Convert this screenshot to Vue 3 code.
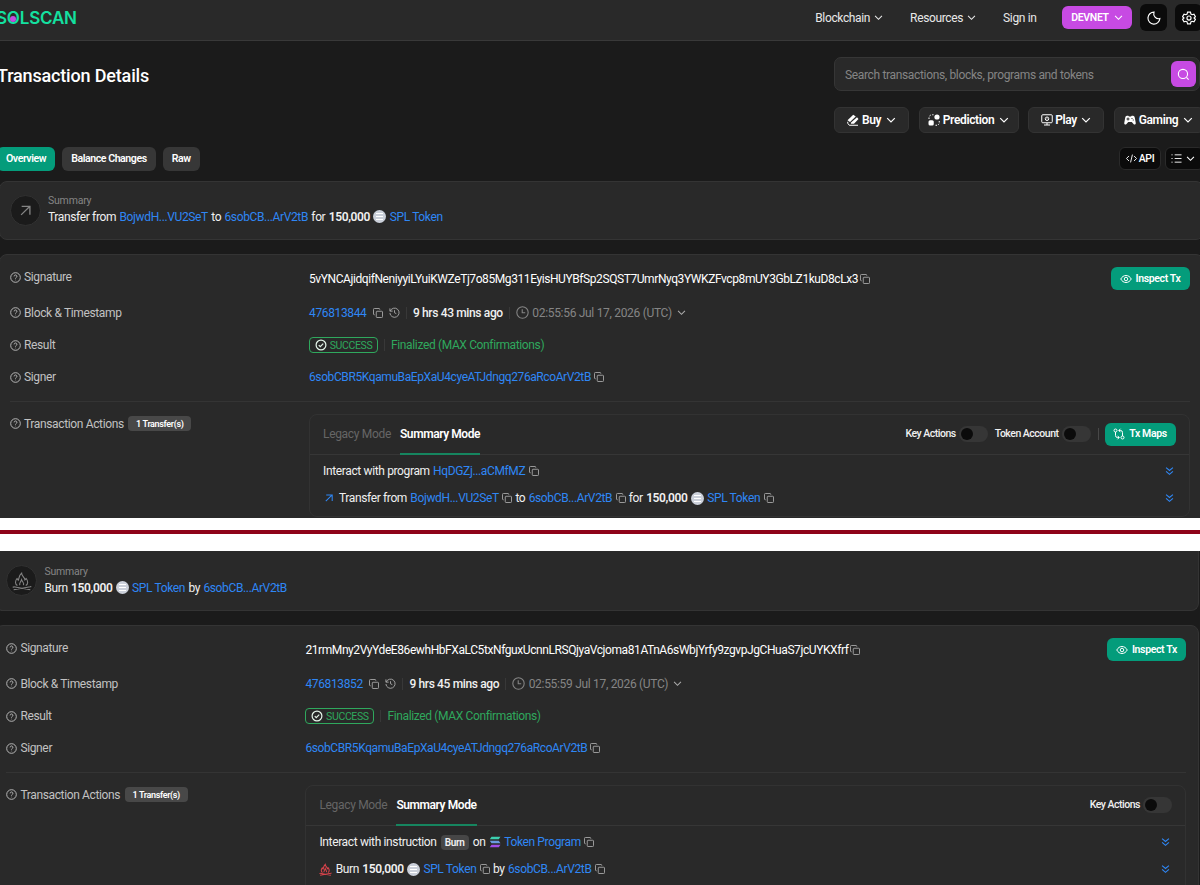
<script setup>
import { ref } from "vue"

const menus = ["Blockchain", "Resources"]
const products = [
  { name: "Buy", icon: "buy", width: 75 },
  { name: "Prediction", icon: "prediction", width: 100 },
  { name: "Play", icon: "play", width: 76 },
  { name: "Gaming", icon: "gaming", width: 90 },
]
const tabs = ["Overview", "Balance Changes", "Raw"]
const activeTab = ref("Overview")
const query = ref("")

const signer = "6sobCBR5KqamuBaEpXaU4cyeATJdngq276aRcoArV2tB"

const transactions = [
  {
    icon: "arrow",
    summary: [
      { t: "Transfer from" }, { link: "BojwdH...VU2SeT" }, { t: "to" }, { link: "6sobCB...ArV2tB" },
      { t: "for" }, { b: "150,000" }, { coin: true }, { link: "SPL Token" },
    ],
    signature: "5vYNCAjidqifNeniyyiLYuiKWZeTj7o85Mg311EyisHUYBfSp2SQST7UmrNyq3YWKZFvcp8mUY3GbLZ1kuD8cLx3",
    block: "476813844",
    age: "9 hrs 43 mins ago",
    time: "02:55:56 Jul 17, 2026 (UTC)",
    toggles: ["Key Actions", "Token Account"],
    maps: true,
    actions: [
      [{ t: "Interact with program" }, { link: "HqDGZj...aCMfMZ" }, { icon: "copy" }],
      [
        { icon: "arrow", lead: true }, { t: "Transfer from" }, { link: "BojwdH...VU2SeT" }, { icon: "copy" },
        { t: "to" }, { link: "6sobCB...ArV2tB" }, { icon: "copy" }, { t: "for" }, { b: "150,000" },
        { coin: true }, { link: "SPL Token" }, { icon: "copy" },
      ],
    ],
  },
  {
    icon: "fire",
    summary: [{ t: "Burn" }, { b: "150,000" }, { coin: true }, { link: "SPL Token" }, { t: "by" }, { link: "6sobCB...ArV2tB" }],
    signature: "21rmMny2VyYdeE86ewhHbFXaLC5txNfguxUcnnLRSQjyaVcjoma81ATnA6sWbjYrfy9zgvpJgCHuaS7jcUYKXfrf",
    block: "476813852",
    age: "9 hrs 45 mins ago",
    time: "02:55:59 Jul 17, 2026 (UTC)",
    toggles: ["Key Actions"],
    maps: false,
    actions: [
      [{ t: "Interact with instruction" }, { tag: "Burn" }, { t: "on" }, { icon: "solana" }, { link: "Token Program" }, { icon: "copy" }],
      [
        { icon: "fire", lead: true }, { t: "Burn" }, { b: "150,000" }, { coin: true }, { link: "SPL Token" },
        { icon: "copy" }, { t: "by" }, { link: "6sobCB...ArV2tB" }, { icon: "copy" },
      ],
    ],
  },
]
</script>

<template>
  <div class="page">
    <svg class="sprite" width="0" height="0">
      <symbol id="copy" viewBox="0 0 20 20">
        <path d="M3.5 13.5H2.5a1.5 1.5 0 0 1-1.5-1.5V2.5A1.5 1.5 0 0 1 2.5 1H12a1.5 1.5 0 0 1 1.5 1.5v1" />
        <rect x="6.5" y="6.5" width="12.5" height="12.5" rx="1.5" />
      </symbol>
      <symbol id="chevron" viewBox="0 0 10 10"><path d="M1.2 3.2 5 7l3.8-3.8" /></symbol>
      <symbol id="double" viewBox="0 0 10 10"><path d="M1.2 1.2 5 4.5l3.8-3.3M1.2 5.4 5 8.7l3.8-3.3" /></symbol>
      <symbol id="help" viewBox="0 0 24 24">
        <circle cx="12" cy="12" r="10.5" />
        <path d="M9 9.5a3 3 0 1 1 4.5 2.6c-1 .6-1.5 1-1.5 2.2M12 17v1" />
      </symbol>
      <symbol id="arrow" viewBox="0 0 10 10"><path d="M1 9 9 1.2M1.5 1.2H9V8.8" /></symbol>
      <symbol id="clock" viewBox="0 0 24 24"><circle cx="12" cy="12" r="10.5" /><path d="M11.5 6v6.5H17" /></symbol>
      <symbol id="history" viewBox="0 0 24 24">
        <path d="M2 3v6h6M2.6 9A10 10 0 1 1 2 13M12 7v5.5l4 2" />
      </symbol>
      <symbol id="check" viewBox="0 0 24 24"><circle cx="12" cy="12" r="9.8" /><path d="m7.5 12.3 3 3 6-6" /></symbol>
      <symbol id="eye" viewBox="0 0 24 24">
        <path d="M1.5 12C4 7.5 7.5 5 12 5s8 2.5 10.5 7c-2.5 4.5-6 7-10.5 7S4 16.5 1.5 12Z" />
        <circle cx="12" cy="12" r="3.5" />
      </symbol>
      <symbol id="maps" viewBox="0 0 24 24">
        <circle cx="5" cy="5" r="3" /><circle cx="19" cy="19" r="3" />
        <path d="M5 8v7a4 4 0 0 0 4 4h3M9 15.5 12.5 19 9 22.5M19 16V9a4 4 0 0 0-4-4h-3M15 1.5 11.5 5 15 8.5" />
      </symbol>
      <symbol id="moon" viewBox="0 0 24 24"><path d="M12 2a8.5 8.5 0 0 0 10 11A10.2 10.2 0 1 1 12 2Z" /></symbol>
      <symbol id="gear" viewBox="0 0 24 24">
        <path d="M9.500 2h5l.8 3.200 2 1.200 3.200-1 2.500 4.300-2.400 2.300 2.400 2.300-2.500 4.300-3.200-1-2 1.200-.8 3.200h-5l-.8-3.200-2-1.200-3.200 1L1 14.300 3.400 12 1 9.700l2.500-4.300 3.200 1 2-1.200Z" />
        <circle cx="12" cy="12" r="3.5" />
      </symbol>
      <symbol id="search" viewBox="0 0 24 24"><circle cx="11" cy="11" r="8.5" /><path d="m17.5 17.5 4 4" /></symbol>
      <symbol id="code" viewBox="0 0 24 24"><path d="M6.5 6.5 1 12l5.5 5.5M17.5 6.5 23 12l-5.5 5.5M14 3.5l-4 17" /></symbol>
      <symbol id="list" viewBox="0 0 24 24"><path d="M8 4h15M8 12h15M8 20h15M1 4h2.5M1 12h2.5M1 20h2.5" /></symbol>
      <symbol id="buy" viewBox="0 0 24 24">
        <path class="solid" d="M1 12.500 12.500 1.500l5 3.500L6 16ZM7.500 17.500 20 6.500l3 3.500-9 9.500H8Z" />
        <path d="M1.500 15.500v3l3 4H22" />
      </symbol>
      <symbol id="prediction" viewBox="0 0 24 24">
        <circle class="solid" cx="18" cy="6" r="5.2" />
        <rect class="solid" x="1" y="12.5" width="10.5" height="10.5" rx="3" />
        <path d="M2 10V7M3 4 5.5 2M8.5 1.5H11M15 22.5h3M20.5 21.5l1.5-2M22.5 17v-3" />
      </symbol>
      <symbol id="play" viewBox="0 0 24 24">
        <rect x="1.5" y="1.500" width="21" height="16" rx="2" />
        <path d="M12 18v4M6 22h12" />
        <circle cx="12" cy="9.5" r="3.5" /><circle class="solid" cx="12" cy="9.5" r="1" />
      </symbol>
      <symbol id="gaming" viewBox="0 0 24 24">
        <path class="solid" fill-rule="evenodd" d="M6 3.500h2.500L10 5h4l1.500-1.500H18c2 0 3 1.500 3.600 4L23.500 18c.3 3-2.500 4-4.500 2l-3.500-4h-7L5 20c-2 2-4.800 1-4.500-2L2.400 7.500C3 5 4 3.500 6 3.500ZM7 7v2H5v2h2v2h2v-2h2V9H9V7Zm8 1v2h2V8Zm2.500 3v2h2v-2Z" />
      </symbol>
      <symbol id="fire" viewBox="0 0 24 24">
        <path d="M6.500 17.500C3.500 16 3.500 12 6 9l1.500 2C9 8.500 8 5.500 11.500 2.500c0 3.500 3.500 4.500 4 8L17 9c2.500 3 2.500 7-.5 8.500M9.500 17c-1.500-2 1-3.500 2-6.500 1 3 4 4.500 2 6.500M2 22.500l20-3.500M2 19l20 3.500M1.500 18.500v1.500M22.500 18v1.500" />
      </symbol>
      <symbol id="solana" viewBox="0 0 24 24">
        <path class="s1" d="M5 1.5h18l-3.5 5H1.5Z" />
        <path class="s2" d="M1.5 9.5h18l3.5 5H5Z" />
        <path class="s3" d="M5 17.5h18l-3.5 5H1.5Z" />
      </symbol>
    </svg>

    <header class="header">
      <div class="logo">S<span class="logo-o">O</span>LSCAN</div>
      <nav class="nav">
        <a v-for="menu in menus" :key="menu" class="menu">{{ menu }}<svg class="icon chevron"><use href="#chevron" /></svg></a>
        <a class="menu sign">Sign in</a>
        <button class="network">DEVNET<svg class="icon chevron"><use href="#chevron" /></svg></button>
        <button class="square"><svg class="icon"><use href="#moon" /></svg></button>
        <button class="square"><svg class="icon"><use href="#gear" /></svg></button>
      </nav>
    </header>

    <section class="top">
      <h1>Transaction Details</h1>
      <div class="search-side">
        <div class="search">
          <input v-model="query" placeholder="Search transactions, blocks, programs and tokens" />
          <button><svg class="icon"><use href="#search" /></svg></button>
        </div>
        <div class="products">
          <button v-for="p in products" :key="p.name" :style="{ width: p.width + 'px' }">
            <svg class="icon"><use :href="'#' + p.icon" /></svg>{{ p.name }}<svg class="icon chevron"><use href="#chevron" /></svg>
          </button>
        </div>
      </div>
    </section>

    <div class="tab-bar">
      <button v-for="tab in tabs" :key="tab" class="tab" :class="{ active: tab === activeTab }" @click="activeTab = tab">{{ tab }}</button>
      <div class="tools">
        <button class="api"><svg class="icon"><use href="#code" /></svg>API</button>
        <button class="list"><svg class="icon"><use href="#list" /></svg><svg class="icon chevron"><use href="#chevron" /></svg></button>
      </div>
    </div>

    <template v-for="(tx, i) in transactions" :key="tx.block">
      <div v-if="i > 0" class="separator"><div class="red-line"></div></div>
      <div class="transaction" :class="{ shifted: i > 0 }">
        <div class="card summary">
          <div class="round"><svg class="icon" :class="tx.icon"><use :href="'#' + tx.icon" /></svg></div>
          <div class="summary-text">
            <div class="caption">Summary</div>
            <div class="line">
              <template v-for="(part, n) in tx.summary" :key="n">
                <a v-if="part.link">{{ part.link }}</a>
                <b v-else-if="part.b">{{ part.b }}</b>
                <i v-else-if="part.coin" class="coin"></i>
                <span v-else>{{ part.t }}</span>
              </template>
            </div>
          </div>
        </div>

        <div class="card details">
          <div class="row first">
            <div class="label"><svg class="icon help"><use href="#help" /></svg>Signature</div>
            <div class="value signature">{{ tx.signature }}<svg class="icon copy"><use href="#copy" /></svg></div>
            <button class="green inspect"><svg class="icon"><use href="#eye" /></svg>Inspect Tx</button>
          </div>
          <div class="row">
            <div class="label"><svg class="icon help"><use href="#help" /></svg>Block &amp; Timestamp</div>
            <div class="value block">
              <a>{{ tx.block }}</a>
              <svg class="icon copy"><use href="#copy" /></svg>
              <svg class="icon history"><use href="#history" /></svg>
              <span class="bar"></span>
              <span class="age">{{ tx.age }}</span>
              <span class="bar"></span>
              <svg class="icon clock"><use href="#clock" /></svg>
              <span class="time">{{ tx.time }}</span>
              <svg class="icon chevron"><use href="#chevron" /></svg>
            </div>
          </div>
          <div class="row">
            <div class="label"><svg class="icon help"><use href="#help" /></svg>Result</div>
            <div class="value">
              <span class="success"><svg class="icon"><use href="#check" /></svg>SUCCESS</span>
              <span class="bar"></span>
              <span class="final">Finalized (MAX Confirmations)</span>
            </div>
          </div>
          <div class="row">
            <div class="label"><svg class="icon help"><use href="#help" /></svg>Signer</div>
            <div class="value signer"><a>{{ signer }}</a><svg class="icon copy"><use href="#copy" /></svg></div>
          </div>
          <div class="divider"></div>
          <div class="actions">
            <div class="label"><svg class="icon help"><use href="#help" /></svg>Transaction Actions<span class="count">1 Transfer(s)</span></div>
            <div class="panel">
              <div class="panel-head">
                <span class="mode">Legacy Mode</span>
                <span class="mode current">Summary Mode</span>
                <div class="controls">
                  <label v-for="name in tx.toggles" :key="name">{{ name }}<i class="toggle"></i></label>
                  <template v-if="tx.maps">
                    <span class="bar light"></span>
                    <button class="green maps"><svg class="icon"><use href="#maps" /></svg>Tx Maps</button>
                  </template>
                </div>
              </div>
              <div class="panel-body">
                <div v-for="(action, a) in tx.actions" :key="a" class="line">
                  <template v-for="(part, n) in action" :key="n">
                    <a v-if="part.link">{{ part.link }}</a>
                    <b v-else-if="part.b">{{ part.b }}</b>
                    <i v-else-if="part.coin" class="coin"></i>
                    <svg v-else-if="part.icon" class="icon" :class="[part.icon, { lead: part.lead }]"><use :href="'#' + part.icon" /></svg>
                    <span v-else-if="part.tag" class="tag">{{ part.tag }}</span>
                    <span v-else>{{ part.t }}</span>
                  </template>
                  <svg class="icon double"><use href="#double" /></svg>
                </div>
              </div>
            </div>
          </div>
        </div>
      </div>
    </template>
  </div>
</template>

<style>
body {
  margin: 0;
  overflow: hidden;
}
symbol .solid {
  fill: currentColor;
  stroke: none;
}
symbol .s1 { fill: #3ccfae; stroke: none; }
symbol .s2 { fill: #6a9be0; stroke: none; }
symbol .s3 { fill: #a04de8; stroke: none; }
</style>

<style scoped>
* {
  box-sizing: border-box;
}
.page {
  width: 1200px;
  height: 885px;
  overflow: hidden;
  background: #1b1b1b;
  color: #f0f0f0;
  font: 12px/16px Roboto, sans-serif;
  letter-spacing: -0.03em;
  white-space: nowrap;
}
.sprite {
  display: block;
}
button {
  display: flex;
  align-items: center;
  justify-content: center;
  flex-shrink: 0;
  padding: 0;
  border: 0;
  color: #fff;
  font: inherit;
  letter-spacing: inherit;
}
a {
  color: #2f87f5;
}
.icon {
  width: 12px;
  height: 12px;
  flex-shrink: 0;
  fill: none;
  stroke: currentColor;
  stroke-width: 2;
}
.chevron {
  width: 9px;
  height: 9px;
  stroke-width: 1.2;
}
.copy {
  width: 10px;
  height: 10px;
  color: #999;
}
.header {
  display: flex;
  justify-content: space-between;
  height: 41px;
  padding-bottom: 5px;
  background: #292929;
  border-bottom: 1px solid #393939;
}
.logo {
  margin-left: -4px;
  color: #14e0a0;
  font: 600 17px/36px Inter, sans-serif;
  letter-spacing: -0.2px;
}
.logo-o {
  position: relative;
}
.logo-o::after {
  content: "";
  position: absolute;
  left: 3.5px;
  top: 7.5px;
  width: 6px;
  height: 6px;
  border-radius: 50%;
  background: #c44be0;
}
.nav {
  display: flex;
  align-items: center;
  margin-right: -2px;
}
.menu {
  display: flex;
  align-items: center;
  gap: 4px;
  margin-right: 27px;
  color: #e8e8e8;
}
.sign {
  margin-right: 25.5px;
}
.network {
  gap: 5px;
  width: 70px;
  height: 23px;
  margin-right: 8px;
  border-radius: 6px;
  background: #c74ae3;
  font-size: 10.5px;
  font-weight: 600;
}
.square {
  width: 27px;
  height: 27px;
  border-radius: 6px;
  background: #0b0b0b;
}
.square + .square {
  margin-left: 8px;
}
.square .icon {
  width: 14px;
  height: 14px;
}
.top {
  display: flex;
  justify-content: space-between;
  height: 106px;
  padding-top: 16px;
}
h1 {
  margin: 7px 0 0 -3px;
  color: #fff;
  font-size: 18px;
  font-weight: 500;
  line-height: 24px;
  letter-spacing: -0.17px;
}
.search-side {
  width: 366px;
}
.search {
  display: flex;
  align-items: center;
  height: 34px;
  padding: 0 3px 0 10px;
  border: 1px solid #363636;
  border-radius: 7px;
  background: #292929;
}
.search input {
  flex: 1;
  padding: 1px 0 0;
  border: 0;
  outline: 0;
  background: none;
  color: #eee;
  font: inherit;
  letter-spacing: -0.34px;
}
.search input::placeholder {
  color: #858585;
}
.search button {
  width: 25px;
  height: 26px;
  border-radius: 6px;
  background: #c74ae3;
}
.search .icon {
  width: 13px;
  height: 13px;
}
.products {
  display: flex;
  gap: 9.5px;
  margin-top: 16px;
}
.products button {
  gap: 2.5px;
  height: 26px;
  border: 1px solid #333;
  border-radius: 6px;
  background: #292929;
  font-weight: 600;
}
.products .chevron {
  width: 10px;
  height: 10px;
  margin-left: 2px;
}
.tab-bar {
  display: flex;
  gap: 7px;
  height: 34px;
}
.tab {
  height: 24px;
  padding: 0 9px;
  border-radius: 6px;
  background: #373737;
  font-size: 10.6px;
  font-weight: 600;
  letter-spacing: -0.45px;
}
.tab.active {
  margin-left: -3px;
  background: #049c7b;
}
.tools {
  display: flex;
  gap: 4px;
  margin: 0 -4px 0 auto;
}
.tools button {
  height: 23px;
  border: 1px solid #2a2a2a;
  border-radius: 6px;
  background: #0b0b0b;
}
.api {
  gap: 2px;
  width: 42px;
  font-size: 10.5px;
  font-weight: 500;
}
.list {
  gap: 4px;
  width: 39px;
  padding-right: 3px;
}
.api .icon,
.list .icon:first-child {
  width: 11px;
  height: 11px;
}
.transaction {
  display: flex;
  flex-direction: column;
  gap: 14px;
  width: 1205px;
  height: 337px;
  margin-left: -1px;
  overflow: hidden;
}
.shifted {
  margin-left: -4.6px;
  width: 1204px;
}
.card {
  flex-shrink: 0;
  border: 1px solid #343434;
  border-radius: 8px;
  background: #292929;
}
.summary {
  display: flex;
  align-items: center;
  gap: 7px;
  height: 59px;
  padding-left: 10px;
}
.summary-text {
  padding-bottom: 3px;
}
.shifted .summary {
  height: 60px;
  border-top: 0;
  border-radius: 0 0 8px 8px;
}
.shifted .summary-text {
  padding-bottom: 1px;
}
.round {
  display: flex;
  align-items: center;
  justify-content: center;
  width: 31px;
  height: 31px;
  border: 1px solid #313131;
  border-radius: 50%;
  background: #1b1b1b;
  color: #858585;
}
.round .arrow {
  width: 11px;
  height: 11px;
  stroke-width: 1.2;
}
.round .fire {
  width: 20px;
  height: 20px;
  stroke-width: 1.3;
}
.caption {
  color: #858585;
  font-size: 10.5px;
  line-height: 15px;
  letter-spacing: -0.2px;
}
.line {
  display: flex;
  align-items: center;
  gap: 3.3px;
  line-height: 18px;
}
.line b {
  font-weight: 600;
}
.coin {
  width: 13px;
  height: 13px;
  border-radius: 50%;
  background: linear-gradient(#fff 0 0) center 3px / 7px 1px no-repeat, linear-gradient(#fff 0 0) center 6px / 7px 1px no-repeat, linear-gradient(#fff 0 0) center 9px / 7px 1px no-repeat, #cbd0da;
}
.details {
  height: 300px;
  padding: 12px 13.5px 0 10px;
}
.shifted .details {
  padding-right: 12.5px;
}
.row {
  display: flex;
  align-items: center;
  height: 32.3px;
}
.row.first {
  height: 23px;
  margin-bottom: 6.6px;
}
.first .label {
  margin-top: -3px;
}
.label {
  display: flex;
  align-items: center;
  gap: 3px;
  width: 299px;
  flex-shrink: 0;
  color: #c2c2c2;
}
.help {
  width: 11px;
  height: 11px;
}
.value {
  display: flex;
  align-items: center;
}
.signature {
  gap: 2px;
  color: #fff;
  letter-spacing: -0.415px;
}
.signer {
  gap: 3px;
  letter-spacing: -0.4px;
}
.green {
  gap: 4px;
  height: 23px;
  border-radius: 6px;
  background: #049c7b;
  font-size: 10.5px;
  font-weight: 600;
}
.inspect {
  width: 79px;
  margin-left: auto;
}
.block .copy {
  margin-left: 6.5px;
}
.history {
  width: 11px;
  height: 11px;
  margin-left: 6px;
  color: #aaa;
}
.bar {
  width: 1px;
  height: 12px;
  margin: 0 6px;
  background: #383838;
}
.age {
  font-weight: 500;
}
.clock {
  width: 13px;
  height: 13px;
  margin-right: 3.5px;
  color: #858585;
}
.time {
  color: #858585;
  letter-spacing: -0.31px;
}
.block .chevron {
  margin-left: 5px;
  color: #aaa;
}
.success {
  display: flex;
  align-items: center;
  justify-content: center;
  gap: 3px;
  width: 69px;
  height: 16px;
  border: 1px solid #2fa85d;
  border-radius: 4px;
  color: #2fa85d;
  font-size: 10.5px;
  line-height: 13px;
}
.success .icon {
  color: #e5f5ea;
  stroke-width: 2.4;
}
.final {
  color: #2fa85d;
}
.divider {
  height: 1px;
  margin-top: 7.2px;
  background: #343434;
}
.actions {
  display: flex;
  align-items: flex-start;
  margin-top: 12px;
}
.actions .label {
  margin-top: 2px;
}
.count {
  display: flex;
  align-items: center;
  justify-content: center;
  width: 63px;
  height: 15px;
  margin-left: 1.5px;
  border-radius: 4px;
  background: #484848;
  color: #fff;
  font-size: 9px;
  font-weight: 600;
}
.panel {
  flex: 1;
  height: 103px;
  border: 1px solid #323232;
  border-radius: 8px;
}
.shifted .panel {
  height: 130px;
}
.panel-head {
  display: flex;
  align-items: stretch;
  gap: 9px;
  height: 40px;
  padding: 0 13px;
  border-bottom: 1px solid #363636;
}
.mode {
  color: #666;
  line-height: 38px;
  letter-spacing: -0.32px;
}
.mode.current {
  margin-bottom: -1px;
  border-bottom: 2px solid #16855f;
  color: #fff;
  font-weight: 600;
  letter-spacing: -0.42px;
}
.controls {
  display: flex;
  align-items: center;
  margin-left: auto;
}
.controls label {
  display: flex;
  align-items: center;
  gap: 3px;
  font-size: 10.5px;
  font-weight: 500;
  letter-spacing: -0.49px;
}
.controls label + label {
  margin-left: 7px;
}
.toggle {
  width: 29px;
  height: 16px;
  padding: 2px;
  border-radius: 8px;
  background: #363636;
}
.toggle::before {
  content: "";
  display: block;
  width: 12px;
  height: 12px;
  border-radius: 50%;
  background: #0b0b0b;
}
.bar.light {
  margin-left: 7px;
  background: #484848;
}
.maps {
  width: 71px;
}
.panel-body {
  padding: 3px 15px 0 13px;
}
.panel-body .line {
  height: 27px;
}
.lead {
  margin-right: 2px;
}
.line .arrow {
  width: 8px;
  height: 8px;
  margin-left: 2px;
  margin-right: 2.6px;
  color: #2f87f5;
  stroke-width: 1.3;
}
.line .fire {
  width: 13px;
  height: 13px;
  margin-right: 0;
  color: #d9434b;
}
.tag {
  margin: 0 1px;
  padding: 0 4px;
  border-radius: 4px;
  background: #464646;
  font-size: 10px;
  font-weight: 600;
  line-height: 15px;
}
.double {
  width: 9px;
  height: 10px;
  margin-left: auto;
  color: #2f87f5;
  stroke-width: 1.3;
}
.separator {
  display: flex;
  align-items: center;
  height: 34px;
  margin-top: -1px;
  padding-bottom: 4px;
  background: #fff;
}
.red-line {
  width: 100%;
  height: 4px;
  background: #8e0319;
}
</style>
